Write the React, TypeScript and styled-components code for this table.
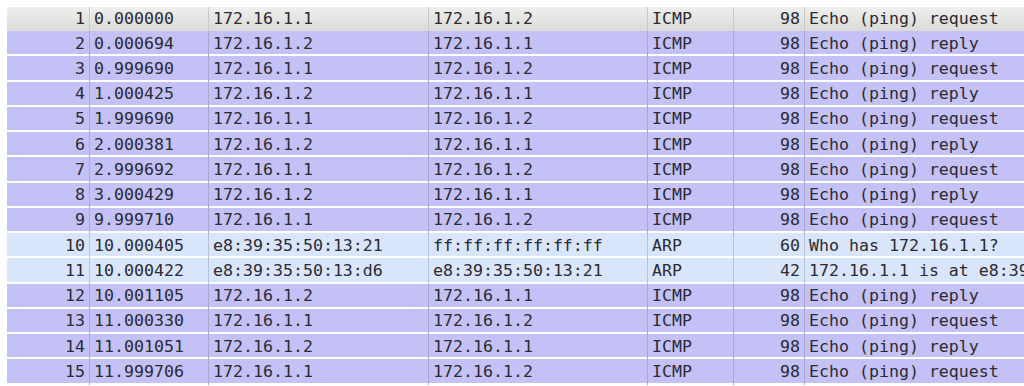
import styled, { createGlobalStyle, css } from "styled-components"

const GlobalStyle = createGlobalStyle`
  html, body {
    margin: 0;
    padding: 0;
    background: #ffffff;
    overflow: hidden;
  }
`

type Kind = "selected" | "icmp" | "arp"

interface Packet {
  no: number
  time: string
  src: string
  dst: string
  proto: string
  len: number
  info: string
}

const packets: Packet[] = [
  { no: 1, time: "0.000000", src: "172.16.1.1", dst: "172.16.1.2", proto: "ICMP", len: 98, info: "Echo (ping) request" },
  { no: 2, time: "0.000694", src: "172.16.1.2", dst: "172.16.1.1", proto: "ICMP", len: 98, info: "Echo (ping) reply" },
  { no: 3, time: "0.999690", src: "172.16.1.1", dst: "172.16.1.2", proto: "ICMP", len: 98, info: "Echo (ping) request" },
  { no: 4, time: "1.000425", src: "172.16.1.2", dst: "172.16.1.1", proto: "ICMP", len: 98, info: "Echo (ping) reply" },
  { no: 5, time: "1.999690", src: "172.16.1.1", dst: "172.16.1.2", proto: "ICMP", len: 98, info: "Echo (ping) request" },
  { no: 6, time: "2.000381", src: "172.16.1.2", dst: "172.16.1.1", proto: "ICMP", len: 98, info: "Echo (ping) reply" },
  { no: 7, time: "2.999692", src: "172.16.1.1", dst: "172.16.1.2", proto: "ICMP", len: 98, info: "Echo (ping) request" },
  { no: 8, time: "3.000429", src: "172.16.1.2", dst: "172.16.1.1", proto: "ICMP", len: 98, info: "Echo (ping) reply" },
  { no: 9, time: "9.999710", src: "172.16.1.1", dst: "172.16.1.2", proto: "ICMP", len: 98, info: "Echo (ping) request" },
  { no: 10, time: "10.000405", src: "e8:39:35:50:13:21", dst: "ff:ff:ff:ff:ff:ff", proto: "ARP", len: 60, info: "Who has 172.16.1.1?" },
  { no: 11, time: "10.000422", src: "e8:39:35:50:13:d6", dst: "e8:39:35:50:13:21", proto: "ARP", len: 42, info: "172.16.1.1 is at e8:39:35:50:13:d6" },
  { no: 12, time: "10.001105", src: "172.16.1.2", dst: "172.16.1.1", proto: "ICMP", len: 98, info: "Echo (ping) reply" },
  { no: 13, time: "11.000330", src: "172.16.1.1", dst: "172.16.1.2", proto: "ICMP", len: 98, info: "Echo (ping) request" },
  { no: 14, time: "11.001051", src: "172.16.1.2", dst: "172.16.1.1", proto: "ICMP", len: 98, info: "Echo (ping) reply" },
  { no: 15, time: "11.999706", src: "172.16.1.1", dst: "172.16.1.2", proto: "ICMP", len: 98, info: "Echo (ping) request" },
]

const PacketList = styled.div`
  display: flex;
  flex-direction: column;
  padding: 7px 0 0 7px;
  font-family: "DejaVu Sans Mono", "Liberation Mono", monospace;
  font-size: 16.6px;
  color: #2b2b33;
`

const Row = styled.div<{ $kind: Kind }>`
  display: grid;
  grid-template-columns: 82px 119px 220px 219px 86px 71px 1fr;
  ${({ $kind }) =>
    $kind === "selected"
      ? css`
          height: 24px;
          background: linear-gradient(#efefee, #dadad8);
          --sep: #c9c9c7;
        `
      : css`
          height: 25.25px;
          background: linear-gradient(
            to bottom,
            ${$kind === "arp" ? "#d8e5fb" : "#c3c1f6"} calc(100% - 2px),
            #ffffff calc(100% - 2px)
          );
          --sep: ${$kind === "arp" ? "#b9c3d6" : "#a9a8d2"};
        `}
`

const Cell = styled.div<{ $right?: boolean; $first?: boolean }>`
  display: flex;
  align-items: center;
  justify-content: ${({ $right }) => ($right ? "flex-end" : "flex-start")};
  padding: ${({ $right }) => ($right ? "0 4px 1px 0" : "0 0 1px 4px")};
  border-left: ${({ $first }) => ($first ? "none" : "1px solid var(--sep)")};
  white-space: nowrap;
  overflow: hidden;
  min-width: 0;
`

const kindOf = (p: Packet): Kind =>
  p.no === 1 ? "selected" : p.proto === "ARP" ? "arp" : "icmp"

const App = () => {
  return (
    <>
      <GlobalStyle />
      <PacketList>
        {packets.map((p) => (
          <Row key={p.no} $kind={kindOf(p)}>
            <Cell $first $right>{p.no}</Cell>
            <Cell>{p.time}</Cell>
            <Cell>{p.src}</Cell>
            <Cell>{p.dst}</Cell>
            <Cell>{p.proto}</Cell>
            <Cell $right>{p.len}</Cell>
            <Cell>{p.info}</Cell>
          </Row>
        ))}
      </PacketList>
    </>
  )
}

export default App
